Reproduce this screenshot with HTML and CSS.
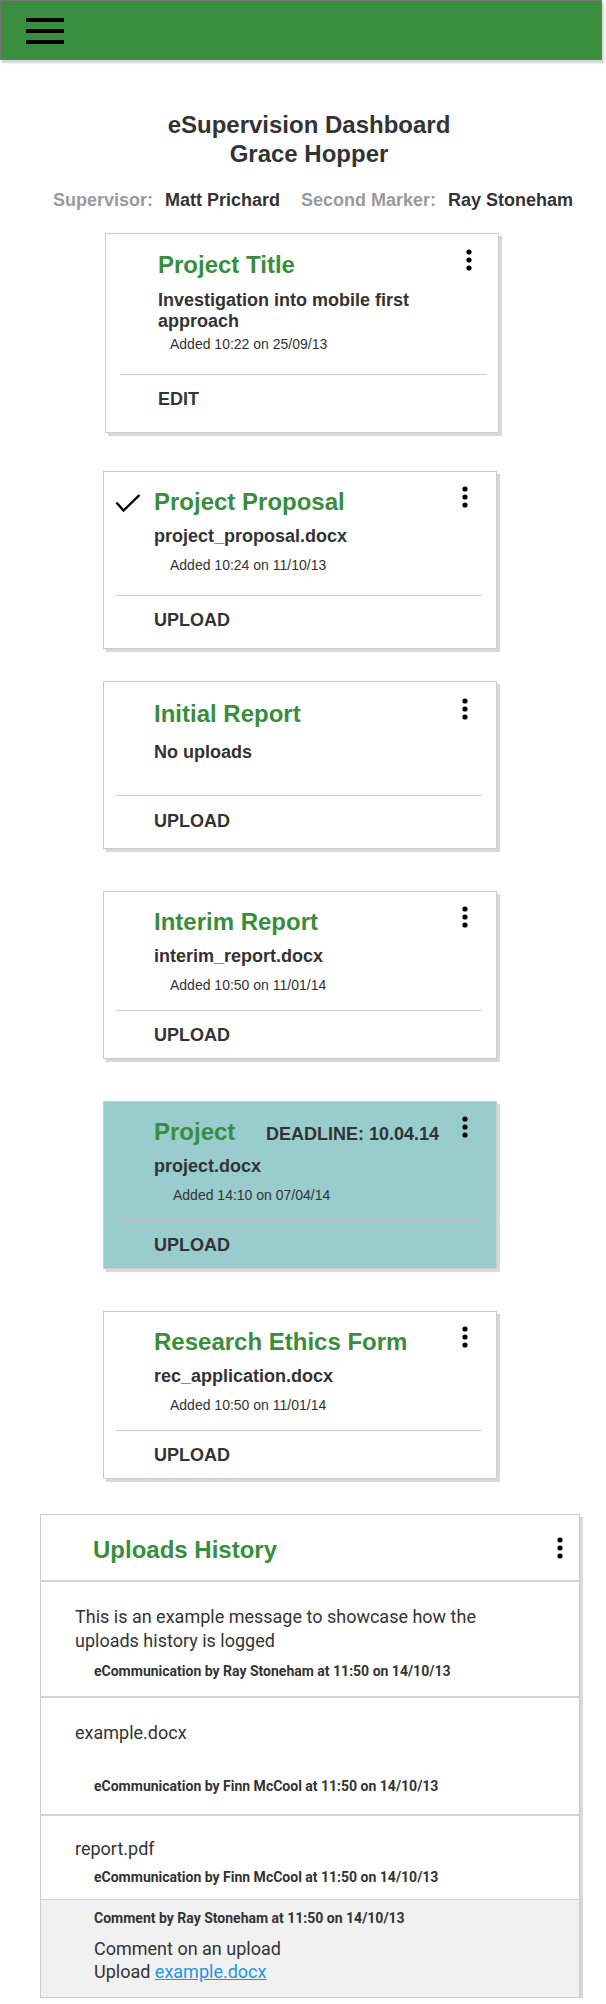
FILE: index.html
```html
<!DOCTYPE html>
<html lang="en">
<head>
<meta charset="utf-8">
<title>eSupervision Dashboard</title>
<link rel="stylesheet" href="styles.css">
</head>
<body>
<header class="topbar">
  <div class="hamburger"><span></span><span></span><span></span></div>
</header>

<main class="page">
  <div class="intro">
    <h1 class="page-title">eSupervision Dashboard<br>Grace Hopper</h1>
    <p class="people">
      <span class="label">Supervisor:</span><span class="name">Matt Prichard</span>
      <span class="label label--second">Second Marker:</span><span class="name">Ray Stoneham</span>
    </p>
  </div>

  <section class="cards">
    <article class="card card--title">
      <div class="card-head">
        <span class="gutter"></span>
        <h2 class="card-title">Project Title</h2>
        <svg class="dots" width="6" height="22" viewBox="0 0 6 22"><circle cx="3" cy="3" r="2.6"/><circle cx="3" cy="11" r="2.6"/><circle cx="3" cy="19" r="2.6"/></svg>
      </div>
      <div class="card-body">
        <p class="file">Investigation into mobile first approach</p>
        <p class="meta">Added 10:22 on 25/09/13</p>
      </div>
      <div class="card-foot"><span class="action">EDIT</span></div>
    </article>

    <article class="card card--proposal">
      <div class="card-head">
        <span class="gutter"><svg class="check" width="26" height="20" viewBox="0 0 26 20"><path d="M1.5 8.5 L8.5 16.5 L24.5 1" fill="none" stroke="#000" stroke-width="2.4"/></svg></span>
        <h2 class="card-title">Project Proposal</h2>
        <svg class="dots" width="6" height="22" viewBox="0 0 6 22"><circle cx="3" cy="3" r="2.6"/><circle cx="3" cy="11" r="2.6"/><circle cx="3" cy="19" r="2.6"/></svg>
      </div>
      <div class="card-body">
        <p class="file">project_proposal.docx</p>
        <p class="meta">Added 10:24 on 11/10/13</p>
      </div>
      <div class="card-foot"><span class="action">UPLOAD</span></div>
    </article>

    <article class="card card--empty">
      <div class="card-head">
        <span class="gutter"></span>
        <h2 class="card-title">Initial Report</h2>
        <svg class="dots" width="6" height="22" viewBox="0 0 6 22"><circle cx="3" cy="3" r="2.6"/><circle cx="3" cy="11" r="2.6"/><circle cx="3" cy="19" r="2.6"/></svg>
      </div>
      <div class="card-body">
        <p class="file">No uploads</p>
      </div>
      <div class="card-foot"><span class="action">UPLOAD</span></div>
    </article>

    <article class="card">
      <div class="card-head">
        <span class="gutter"></span>
        <h2 class="card-title">Interim Report</h2>
        <svg class="dots" width="6" height="22" viewBox="0 0 6 22"><circle cx="3" cy="3" r="2.6"/><circle cx="3" cy="11" r="2.6"/><circle cx="3" cy="19" r="2.6"/></svg>
      </div>
      <div class="card-body">
        <p class="file">interim_report.docx</p>
        <p class="meta">Added 10:50 on 11/01/14</p>
      </div>
      <div class="card-foot"><span class="action">UPLOAD</span></div>
    </article>

    <article class="card card--due">
      <div class="card-head">
        <span class="gutter"></span>
        <h2 class="card-title">Project</h2>
        <span class="deadline">DEADLINE: 10.04.14</span>
        <svg class="dots" width="6" height="22" viewBox="0 0 6 22"><circle cx="3" cy="3" r="2.6"/><circle cx="3" cy="11" r="2.6"/><circle cx="3" cy="19" r="2.6"/></svg>
      </div>
      <div class="card-body">
        <p class="file">project.docx</p>
        <p class="meta">Added 14:10 on 07/04/14</p>
      </div>
      <div class="card-foot"><span class="action">UPLOAD</span></div>
    </article>

    <article class="card">
      <div class="card-head">
        <span class="gutter"></span>
        <h2 class="card-title">Research Ethics Form</h2>
        <svg class="dots" width="6" height="22" viewBox="0 0 6 22"><circle cx="3" cy="3" r="2.6"/><circle cx="3" cy="11" r="2.6"/><circle cx="3" cy="19" r="2.6"/></svg>
      </div>
      <div class="card-body">
        <p class="file">rec_application.docx</p>
        <p class="meta">Added 10:50 on 11/01/14</p>
      </div>
      <div class="card-foot"><span class="action">UPLOAD</span></div>
    </article>
  </section>

  <section class="history">
    <div class="history-head">
      <h2 class="history-title">Uploads History</h2>
      <svg class="dots" width="6" height="22" viewBox="0 0 6 22"><circle cx="3" cy="3" r="2.6"/><circle cx="3" cy="11" r="2.6"/><circle cx="3" cy="19" r="2.6"/></svg>
    </div>
    <div class="entry">
      <p class="entry-text">This is an example message to showcase how the uploads history is logged</p>
      <p class="entry-meta">eCommunication by Ray Stoneham at 11:50 on 14/10/13</p>
    </div>
    <div class="entry entry--file">
      <p class="entry-text">example.docx</p>
      <p class="entry-meta">eCommunication by Finn McCool at 11:50 on 14/10/13</p>
    </div>
    <div class="entry entry--report">
      <p class="entry-text">report.pdf</p>
      <p class="entry-meta">eCommunication by Finn McCool at 11:50 on 14/10/13</p>
    </div>
    <div class="comment">
      <p class="entry-meta comment-meta">Comment by Ray Stoneham at 11:50 on 14/10/13</p>
      <p class="comment-text">Comment on an upload<br>Upload <a href="#" class="link">example.docx</a></p>
    </div>
  </section>
</main>
</body>
</html>
```

FILE: styles.css
```css
* { box-sizing: border-box; }

body {
  margin: 0;
  font-family: "Liberation Sans", Arial, sans-serif;
  color: #333;
  background: #fff;
}

p, h1, h2 { margin: 0; }

/* top bar */
.topbar {
  width: 602px;
  height: 60px;
  background: #3a8f3e;
  border: 1px solid #737373;
  box-shadow: 2px 3px 2px rgba(0, 0, 0, 0.18);
  padding: 17px 0 0 25px;
}
.hamburger {
  display: flex;
  flex-direction: column;
  gap: 7px;
  width: 38px;
}
.hamburger span {
  display: block;
  height: 4px;
  background: #000;
}

/* intro */
.intro { padding-top: 50px; }
.page-title {
  text-align: center;
  padding-left: 12px;
  font-size: 24px;
  line-height: 29px;
  font-weight: 700;
  color: #333;
}
.people {
  margin-top: 22px;
  display: flex;
  justify-content: center;
  padding-left: 20px;
  font-size: 18px;
  line-height: 21px;
  font-weight: 700;
}
.label { color: #9a9a9a; margin-right: 12px; }
.label--second { margin-left: 21px; }
.name { color: #333; }

/* cards */
.cards {
  margin-top: 22px;
  padding-left: 103px;
  display: flex;
  flex-direction: column;
  align-items: flex-start;
}
.card {
  width: 394px;
  background: #fff;
  border: 1px solid #cccccc;
  box-shadow: 3px 3px 0 #d8d8d8;
  padding: 16px 14px 12px 12px;
  margin-top: 42px;
}
.card-head {
  display: flex;
  align-items: baseline;
}
.gutter {
  width: 38px;
  flex: none;
  align-self: flex-start;
}
.check { display: block; margin-top: 6px; margin-left: -1px; }
.card-title {
  flex: 1;
  font-size: 24px;
  line-height: 28px;
  font-weight: 700;
  color: #388e3c;
}
.dots {
  align-self: flex-start;
  margin-top: -2px;
  margin-right: 14px;
  fill: #000;
  flex: none;
}
.card-body { padding-left: 38px; }
.file {
  margin-top: 10px;
  font-size: 18px;
  line-height: 21px;
  font-weight: 700;
  color: #333;
}
.meta {
  margin-top: 10px;
  padding-left: 16px;
  font-size: 14px;
  line-height: 17px;
  color: #333;
}
.card-foot {
  margin-top: 16px;
  border-top: 1px solid #cccccc;
  padding: 14px 0 0 38px;
}
.action {
  display: block;
  font-size: 18px;
  line-height: 21px;
  font-weight: 700;
  color: #333;
}

.card--title {
  margin-top: 0;
  margin-left: 2px;
  padding: 17px 12px 22px 14px;
}
.card--title .file { margin-top: 11px; }
.card--title .meta { margin-top: 4px; padding-left: 12px; }
.card--title .card-foot { margin-top: 21px; }

.card--proposal { margin-top: 38px; padding-bottom: 17px; }
.card--proposal .card-foot { margin-top: 21px; }

.card--empty { margin-top: 32px; padding-top: 18px; padding-bottom: 16px; }
.card--empty .file { margin-top: 14px; }
.card--empty .card-foot { margin-top: 32px; padding-top: 15px; }

.card--due { background: #99cccc; }
.card--due .deadline {
  font-size: 18px;
  font-weight: 700;
  color: #333;
  margin-right: 23px;
}
.card--due .meta { padding-left: 19px; }
.card--due .card-foot { border-top-color: #bcbcbc; }

/* history */
.history {
  margin: 35px 0 0 40px;
  width: 540px;
  background: #fff;
  border: 1px solid #cccccc;
  box-shadow: 3px 3px 0 #d8d8d8;
  font-family: Roboto, "Liberation Sans", sans-serif;
}
.history-head {
  display: flex;
  align-items: flex-start;
  padding: 21px 16px 17px 52px;
  border-bottom: 2px solid #d4d4d4;
}
.history-title {
  flex: 1;
  font-family: "Liberation Sans", Arial, sans-serif;
  font-size: 24px;
  line-height: 27px;
  font-weight: 700;
  color: #388e3c;
}
.history-head .dots { margin: 1px 0 0; }

.entry {
  padding: 23px 60px 17px 34px;
  border-bottom: 2px solid #d4d4d4;
}
.entry-text {
  font-size: 18px;
  line-height: 24px;
  color: #333;
}
.entry-meta {
  margin-top: 10px;
  padding-left: 19px;
  font-size: 14px;
  line-height: 16px;
  font-weight: 700;
  color: #333;
}
.entry--file { padding-bottom: 20px; }
.entry--file .entry-meta { margin-top: 33px; }
.entry--report {
  padding-top: 21px;
  padding-bottom: 14px;
  border-bottom-width: 1px;
}
.entry--report .entry-meta { margin-top: 8px; }

.comment {
  background: #f1f1f1;
  padding: 10px 20px 14px 53px;
}
.comment-meta { margin-top: 0; padding-left: 0; }
.comment-text {
  margin-top: 11px;
  font-size: 18px;
  line-height: 23px;
  color: #333;
}
.link { color: #1e96e6; text-decoration: underline; }
```
